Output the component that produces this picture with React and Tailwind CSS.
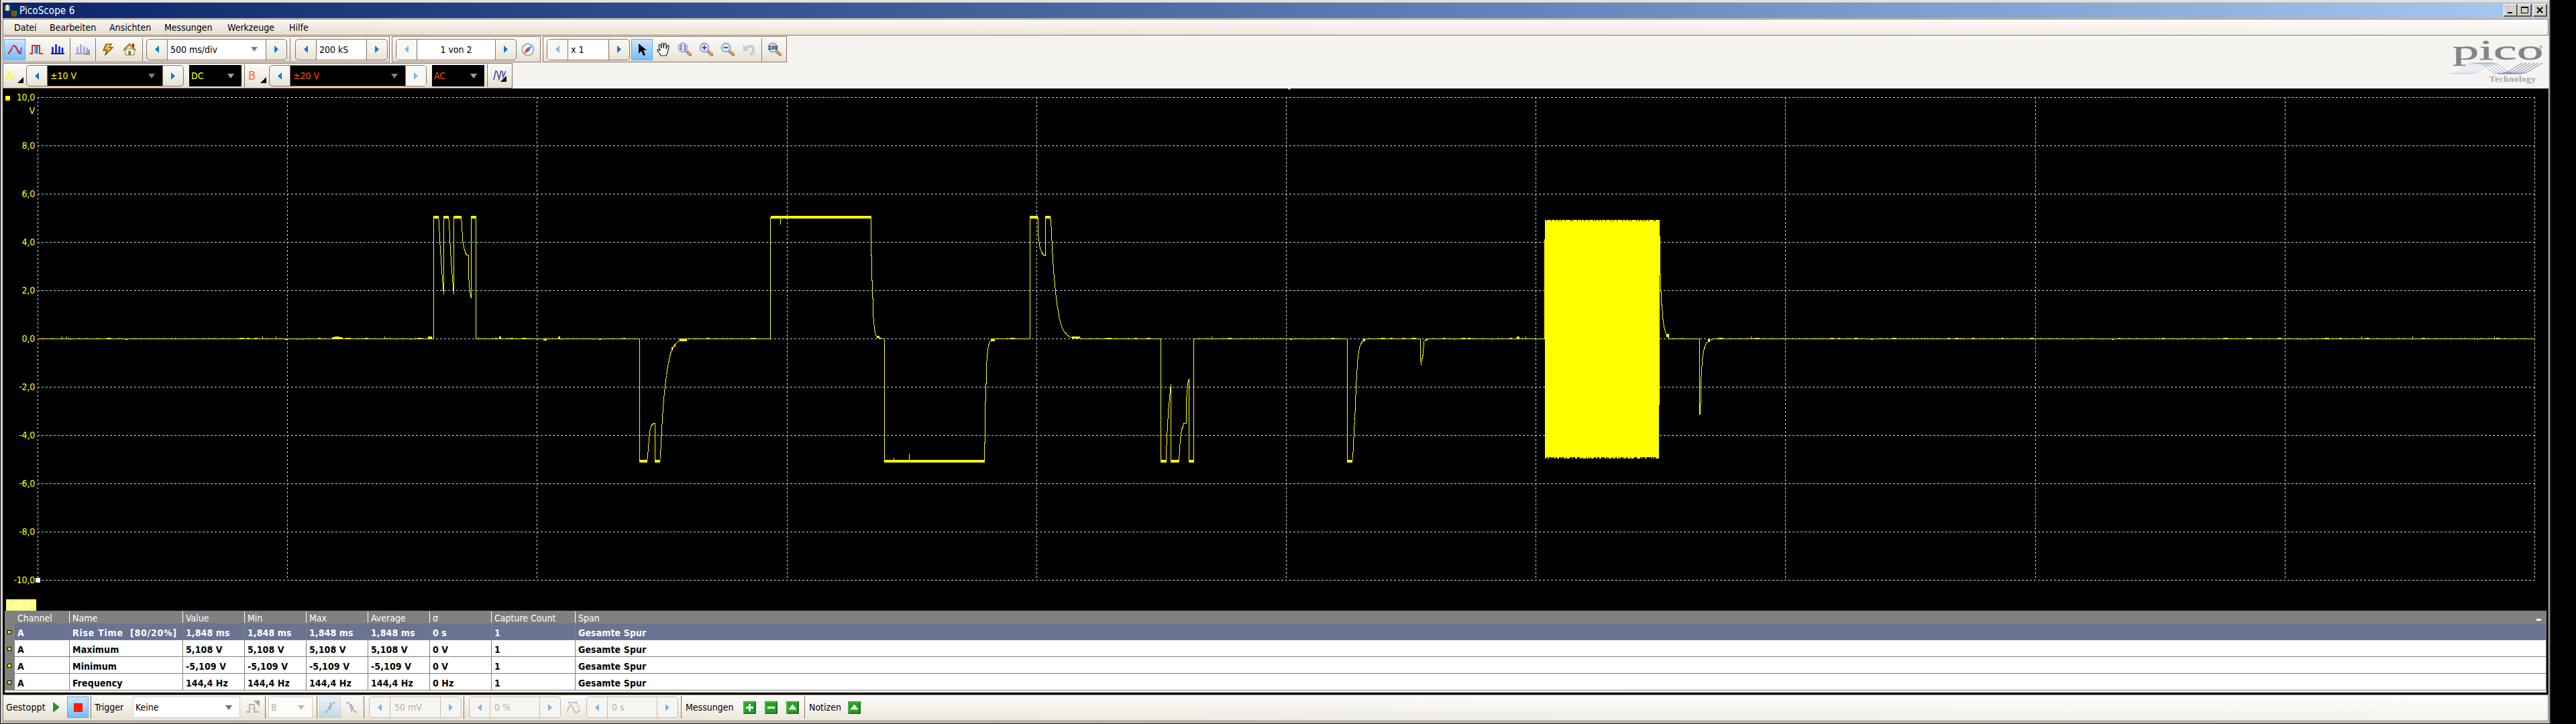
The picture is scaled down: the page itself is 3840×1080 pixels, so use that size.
import React from 'react';
import clsx from 'clsx';

/* ---------- channel A trace ---------- */

const ZERO = 505;

// [x, y] vertices of the captured signal
const TRACE = [
  [56, 505], [646, 505], [646, 324], [653, 324], [654, 331], [655, 357], [656, 372], [657, 386], [658, 404], [659, 415],
  [660, 428], [661, 438], [661, 324], [668, 324], [669, 330], [670, 355], [671, 370], [672, 391], [673, 402], [674, 415],
  [675, 428], [676, 438], [676, 324], [687, 324], [688, 336], [689, 354], [690, 364], [691, 367], [692, 373], [693, 376],
  [695, 380], [698, 380], [698, 412], [699, 423], [700, 435], [701, 440], [702, 444], [702, 324], [709, 324], [709, 505],
  [953, 505], [953, 688], [964, 688], [965, 680], [966, 667], [967, 655], [968, 644], [969, 639], [970, 636], [972, 632],
  [976, 631], [976, 688], [983, 688], [984, 683], [985, 657], [986, 641], [987, 622], [988, 609], [989, 594], [990, 586],
  [991, 576], [992, 567], [993, 560], [994, 551], [995, 546], [996, 541], [997, 537], [998, 531], [999, 527], [1000, 523],
  [1002, 520], [1004, 516], [1007, 512], [1010, 509], [1013, 507], [1025, 505],
  [1148, 505], [1148, 324], [1298, 324], [1298, 381], [1299, 381], [1299, 418], [1300, 418], [1300, 444], [1301, 444],
  [1301, 467], [1302, 480], [1303, 489], [1304, 495], [1305, 500], [1307, 502], [1310, 504], [1318, 505],
  [1318, 688], [1467, 688], [1467, 660], [1468, 660], [1468, 599], [1469, 599], [1469, 572], [1470, 572], [1470, 544],
  [1471, 533], [1472, 522], [1473, 516], [1474, 512], [1475, 509], [1478, 507], [1483, 505],
  [1535, 505], [1535, 324], [1547, 324], [1547, 347], [1548, 357], [1549, 364], [1550, 370], [1552, 375], [1554, 379],
  [1558, 381], [1558, 324], [1565, 324], [1566, 328], [1567, 347], [1568, 370], [1569, 386], [1570, 402], [1571, 414],
  [1572, 423], [1573, 435], [1574, 443], [1575, 452], [1576, 458], [1577, 462], [1578, 471], [1580, 480], [1583, 489],
  [1586, 494], [1590, 499], [1594, 502], [1600, 504], [1620, 505],
  [1730, 505], [1730, 688], [1738, 688], [1738, 677], [1739, 651], [1740, 635], [1741, 615], [1742, 604], [1743, 593],
  [1744, 580], [1745, 573], [1745, 688], [1757, 688], [1758, 670], [1759, 654], [1760, 647], [1761, 640], [1763, 636],
  [1764, 631], [1768, 631], [1768, 596], [1769, 586], [1770, 573], [1771, 567], [1772, 565], [1772, 688], [1779, 688],
  [1779, 505], [2008, 505], [2008, 688], [2015, 688], [2016, 683], [2017, 664], [2018, 641], [2019, 628], [2020, 602],
  [2021, 576], [2022, 560], [2023, 541], [2024, 531], [2025, 525], [2026, 518], [2028, 513], [2030, 509], [2034, 507],
  [2036, 505], [2117, 505], [2117, 535], [2118, 544], [2119, 536], [2121, 528], [2122, 509], [2125, 506], [2129, 505],
  [2302, 505], [2302, 357], [2303, 357], [2474, 352], [2474, 409], [2475, 409], [2475, 435], [2476, 435], [2476, 454],
  [2477, 454], [2478, 470], [2479, 480], [2480, 487], [2482, 494], [2484, 499], [2488, 505],
  [2533, 505], [2533, 618], [2534, 616], [2534, 602], [2535, 602], [2535, 568], [2536, 555], [2537, 537], [2538, 531],
  [2540, 519], [2541, 517], [2543, 511], [2546, 509], [2550, 506], [2555, 505], [3778, 505],
];

// [x, y, w, h] solid areas: clipped plateaus, spikes, noise bumps and the burst
const BLOCKS = [
  [646, 322, 8, 4], [661, 322, 8, 4], [676, 322, 12, 4], [702, 322, 8, 4],
  [953, 686, 12, 4], [976, 686, 8, 4],
  [1149, 322, 150, 4], [1163, 325, 1, 10],
  [1318, 686, 150, 4], [1332, 683, 1, 4], [1355, 677, 1, 10],
  [1535, 322, 12, 4], [1558, 322, 8, 4],
  [1730, 686, 9, 4], [1745, 686, 12, 4], [1772, 686, 8, 4], [2008, 686, 8, 4],
  [638, 502, 6, 3], [744, 502, 3, 3], [832, 502, 3, 3], [810, 506, 5, 2], [1013, 505, 11, 4],
  [495, 503, 16, 2], [499, 502, 7, 2], [1001, 518, 2, 5], [1005, 513, 2, 4],
  [1477, 505, 6, 4], [1598, 502, 12, 3], [1307, 501, 4, 3], [2032, 505, 3, 4], [2125, 505, 3, 3],
  [2261, 502, 4, 3], [2484, 498, 4, 5], [2546, 505, 3, 5],
  [2303, 328, 170, 356], [2473, 328, 1, 276],
];

const IDLE = [[60, 640], [712, 950], [1026, 1146], [1486, 1533], [1622, 1728], [1782, 2006], [2040, 2115], [2132, 2300], [2490, 2530], [2560, 3776]];

function makeRandom(seed) {
  let s = seed;
  return () => {
    s = (s * 1103515245 + 12345) % 2147483648;
    return s / 2147483648;
  };
}

const box = ([x, y, w, h]) => `M${x} ${y}h${w}v${h}h${-w}z`;

function noisePath() {
  const rnd = makeRandom(7);
  let d = '';
  IDLE.forEach(([from, to]) => {
    let x = from + Math.floor(rnd() * 6);
    while (x < to - 8) {
      const w = rnd() > 0.75 ? 3 + Math.floor(rnd() * 6) : 1;
      const kind = rnd();
      if (kind > 0.96) d += box([x, ZERO - 3, 1, 3]);
      else if (kind > 0.86) d += box([x, ZERO + 1, Math.min(w, 3), 1]);
      else d += box([x, ZERO - 1, w, 1]);
      x += w + 2 + Math.floor(rnd() * 13);
    }
  });
  return d;
}

function notchPath() {
  const rnd = makeRandom(21);
  let d = '';
  for (let x = 2305; x < 2470; x += 2 + Math.floor(rnd() * 7)) d += box([x, 328, 1, 2]);
  for (let x = 2305; x < 2470; x += 2 + Math.floor(rnd() * 5)) d += box([x, 682, 1 + Math.floor(rnd() * 3), 2]);
  return d;
}

const COLS = [56, 428, 800, 1173, 1545, 1917, 2289, 2661, 3034, 3406, 3778];
const ROWS = [145, 217, 289, 361, 433, 505, 577, 649, 721, 793, 865];
const LABELS = ['10,0', '8,0', '6,0', '4,0', '2,0', '0,0', '-2,0', '-4,0', '-6,0', '-8,0', '-10,0'];

const Plot = () => (
  <div className="relative h-[779px] bg-black text-[#ff0]">
    <svg className="absolute inset-0" width="3794" height="779" viewBox="4 132 3794 779" shapeRendering="crispEdges">
      <g stroke="#b4dde0" strokeWidth="1" strokeDasharray="3 3">
        {ROWS.map((y) => (
          <line key={y} x1="56" x2="3779" y1={y + 0.5} y2={y + 0.5} />
        ))}
        {COLS.map((x) => (
          <line key={x} x1={x + 0.5} x2={x + 0.5} y1="145" y2="866" />
        ))}
      </g>
      {/* the trace hides the zero line only where it lies on it */}
      <polyline points={TRACE.map(([x, y]) => `${x + 0.5},${y + 0.5}`).join(' ')} fill="none" stroke="#ff0" strokeWidth="1" />
      <path d={BLOCKS.map(box).join('') + noisePath()} fill="#ff0" />
      <path d={notchPath()} fill="#000" />
      <rect x="8" y="143" width="7" height="7" fill="#ff0" />
      <rect x="53" y="862" width="7" height="7" fill="#fff" />
      <path d="M1919 132h6l-3 2z" fill="#bbb" />
    </svg>
    {LABELS.map((label, i) => (
      <span
        key={label}
        className="absolute left-0 w-[48px] text-right leading-[18px] -tracking-[0.2px]"
        style={{ top: ROWS[i] - 132 - 9 }}
      >
        {label}
      </span>
    ))}
    <span className="absolute top-[24px] left-0 w-[48px] text-right leading-[18px]">V</span>
    <div className="absolute bottom-0 left-[5px] flex h-[17px] w-[45px] items-center justify-center bg-[#ffff80] text-white">x1,0</div>
  </div>
);

/* ---------- toolbar parts ---------- */

const barGradient = 'bg-linear-to-b from-[#fbfaf8] via-[#f3f0e9] to-[#e6e0d0]';

const Toolbar = ({ className, children }) => (
  <div className={clsx('flex items-center border border-[#8c7063]', barGradient, className)}>{children}</div>
);

const Sep = ({ className }) => <div className={clsx('h-[34px] w-px shrink-0 bg-[#8c7063]', className)} />;

const Slot = ({ active, dim, className, children }) => (
  <div
    className={clsx(
      'flex size-[32px] shrink-0 items-center justify-center',
      active && 'border border-[#5cabea] bg-linear-to-b from-[#cbe6fb] to-[#74bcf8]',
      dim && 'opacity-35',
      className
    )}
  >
    {children}
  </div>
);

const Arrow = ({ left, dim }) => (
  <svg width="6" height="11" viewBox="0 0 6 11" className={dim ? 'opacity-50' : ''}>
    <path d={left ? 'M6 0v11L0 5.500z' : 'M0 0v11l6-5.500z'} fill="#0a7cd0" />
  </svg>
);

const Caret = ({ color = '#808080' }) => (
  <svg width="10" height="7" viewBox="0 0 10 7">
    <path d="M0 0h10L5 7z" fill={color} />
  </svg>
);

// "< value >" control, optionally with a drop-down arrow in the field
const Spinner = ({ className, fieldClass = 'bg-white text-black', caretClass = 'mr-[6px]', text, caret, center, dimLeft, dimRight, off }) => (
  <div
    className={clsx(
      'flex h-[32px] shrink-0 overflow-hidden rounded-[5px] border',
      off ? 'border-[#c4bbb2] bg-[#f7f5f1] text-[#b3b1ad]' : 'border-[#8c7063]',
      className
    )}
  >
    <div className={clsx('flex w-[30px] shrink-0 items-center justify-center', dimLeft && 'bg-[#f8f7f4]')}>
      <Arrow left dim={dimLeft || off} />
    </div>
    <div
      className={clsx(
        'flex grow items-center border-x px-[4px]',
        center && 'justify-center',
        off ? 'border-[#c4bbb2] pl-[6px]' : 'border-[#8c7063]',
        !off && fieldClass
      )}
    >
      <span>{text}</span>
      {caret && (
        <span className={clsx('ml-auto', caretClass)}>
          <Caret />
        </span>
      )}
    </div>
    <div className={clsx('flex w-[30px] shrink-0 items-center justify-center', dimRight && 'bg-[#f8f7f4]')}>
      <Arrow dim={dimRight || off} />
    </div>
  </div>
);

const Select = ({ className, text, caret }) => (
  <div className={clsx('flex h-[32px] shrink-0 items-center justify-between pr-[11px] pl-[3px]', className)}>
    <span>{text}</span>
    <Caret color={caret} />
  </div>
);

const Magnifier = ({ children }) => (
  <svg width="22" height="22" viewBox="0 0 22 22">
    <path d="M12.500 12.500l6.500 6" stroke="#8a7f86" strokeWidth="4.500" strokeLinecap="round" />
    <path d="M13 12.500l6 5.500" stroke="#f29a4a" strokeWidth="3" strokeLinecap="round" />
    <circle cx="8" cy="8" r="6.500" fill="#d8e9fb" stroke="#92a9cc" strokeWidth="1.800" />
    {children}
  </svg>
);

const BarsIcon = () => (
  <svg width="20" height="16" viewBox="0 0 20 16">
    <path d="M2.500 4v9M7.500 0v13M12.500 3v10M17 5v8" stroke="#0a1ee0" strokeWidth="2.600" />
    <path d="M0 14h20" stroke="#222266" strokeWidth="2" />
  </svg>
);

const Corner = ({ className }) => (
  <svg width="9" height="9" viewBox="0 0 9 9" className={className}>
    <path d="M9 0v9H0z" fill="#000" />
  </svg>
);

const GreenButton = ({ className, d }) => (
  <svg width="19" height="19" viewBox="0 0 19 19" className={clsx('shrink-0', className)}>
    <rect x="0.500" y="0.500" width="18" height="18" fill="#1ea51e" stroke="#0d7a1c" />
    <path d="M1 18V1h17" fill="none" stroke="#7fd07f" />
    <path d="M18 2v16H2" fill="none" stroke="#31563c" strokeWidth="1.500" />
    <path d={d} fill="#fff" />
  </svg>
);

/* ---------- window parts ---------- */

const CaptionButton = ({ className, children }) => (
  <div
    className={clsx(
      'flex h-[19px] w-[21px] items-center justify-center border-t border-r-2 border-b-2 border-l border-t-white border-r-[#55534f] border-b-[#55534f] border-l-white bg-[#d4d0c8]',
      className
    )}
  >
    <svg width="14" height="14" viewBox="0 0 14 14" shapeRendering="crispEdges">
      {children}
    </svg>
  </div>
);

const TitleBar = () => (
  <div className="flex h-[23px] items-center bg-linear-to-r from-[#0a246a] to-[#a6caf0] text-white">
    <svg width="20" height="20" viewBox="0 0 20 20" className="ml-[2px]">
      <defs>
        <linearGradient id="up" x1="0" x2="1">
          <stop offset="0" stopColor="#e03020" />
          <stop offset="0.5" stopColor="#fff" />
          <stop offset="1" stopColor="#20a020" />
        </linearGradient>
        <linearGradient id="down" x1="0" x2="1">
          <stop offset="0" stopColor="#e02010" />
          <stop offset="0.5" stopColor="#705010" />
          <stop offset="1" stopColor="#10a010" />
        </linearGradient>
      </defs>
      <path d="M1 10V5q0-4 4-4t4 4v5z" fill="url(#up)" />
      <path d="M11 10h8v5q0 4-4 4t-4-4z" fill="url(#down)" />
    </svg>
    <span className="ml-[3px] pt-px text-[15px] tracking-[0.1px]">PicoScope 6</span>
    <div className="mr-[2px] ml-auto flex">
      <CaptionButton>
        <rect x="3" y="10" width="7" height="2" />
      </CaptionButton>
      <CaptionButton>
        <path d="M2 2h11v10H2zM3 4v7h9V4z" fillRule="evenodd" />
      </CaptionButton>
      <CaptionButton className="ml-[2px]">
        <path d="M3 3l8 8M11 3l-8 8" stroke="#000" strokeWidth="2" shapeRendering="auto" />
      </CaptionButton>
    </div>
  </div>
);

const MenuBar = () => (
  <div className="relative mt-px flex h-[25px] items-center border border-[#8c7063] bg-linear-to-b from-[#f8f6f2] to-[#e5dece]">
    {/* bar gets lighter towards the right edge */}
    <div className="absolute inset-0 bg-linear-to-r from-transparent to-white/60" />
    <span className="relative w-[53px] pl-[16px]">Datei</span>
    <span className="relative ml-[16px] w-[89px]">Bearbeiten</span>
    <span className="relative w-[82px]">Ansichten</span>
    <span className="relative w-[94px]">Messungen</span>
    <span className="relative w-[92px]">Werkzeuge</span>
    <span className="relative">Hilfe</span>
  </div>
);

const PicoLogo = () => (
  <svg width="150" height="79" viewBox="3648 53 150 79" className="ml-auto">
    <g fill="none" strokeWidth="0.900">
      {[0, 6, 12, 18, 24, 30].map((o) => (
        <path key={o} d={`M${3649 + o} 110c24 0 20-16 38-16`} stroke="#b4cdea" />
      ))}
      {[0, 6, 12, 18, 24].map((o) => (
        <path key={o} d={`M${3686 + o} 94c24 0 20 16 40 16`} stroke="#8fa9cc" />
      ))}
      {[0, 6, 12, 18, 24, 30].map((o) => (
        <path key={o} d={`M${3723 + o} 110c14 0 18-6 36-16`} stroke="#5f7699" />
      ))}
    </g>
    <text transform="translate(3655 89) scale(1.870 1)" fontFamily="Liberation Serif, serif" fontSize="42" fill="#858585" stroke="#858585" strokeWidth="0.500">
      pico
    </text>
    <text x="3783" y="73" fontFamily="Liberation Serif, serif" fontSize="9" fill="#858585">
      ®
    </text>
    <text x="3710" y="121.500" textLength="69" fontFamily="Liberation Serif, serif" fontWeight="bold" fontSize="13" fill="#a3a3a3">
      Technology
    </text>
  </svg>
);

const TopTools = () => (
  <div className="flex h-[39px] gap-[3px]">
    <Toolbar className="w-[577px] pl-[1px]">
      <Slot active>
        <svg width="22" height="16" viewBox="0 0 22 16" fill="none" strokeWidth="2">
          <path d="M1 14c4 0 5-12 9-12s5 12 8 12 2-6 3-9" stroke="#5a6ad8" />
          <path d="M1 13c3 0 4-4 6-7M8 3c6-3 7 10 13 11" stroke="#e8242c" />
        </svg>
      </Slot>
      <Slot>
        <svg width="20" height="16" viewBox="0 0 20 16">
          <path d="M7 2h6v12H7z" fill="#7fb8dc" />
          <path d="M9 2h3v12H9z" fill="#3f86b8" />
          <path d="M0 14h4V2h11v12h5" fill="none" stroke="#ee2222" strokeWidth="2" />
        </svg>
      </Slot>
      <Slot>
        <BarsIcon />
      </Slot>
      <Sep className="ml-[2px]" />
      <Slot dim className="ml-[2px]">
        <BarsIcon />
        <Corner className="-ml-[8px] translate-y-[4px]" />
      </Slot>
      <Sep className="ml-[3px]" />
      <Slot className="ml-[2px]">
        <svg width="18" height="18" viewBox="0 0 18 18">
          <path d="M6 1h8l-4 5h6L5 17l2-7H2z" fill="#f0ac22" stroke="#6d4a10" strokeWidth="1.300" />
          <path d="M7 2h5l-4 5h5" fill="none" stroke="#fff0a0" />
        </svg>
      </Slot>
      <Slot>
        <svg width="20" height="19" viewBox="0 0 20 19">
          <path d="M14 1h3v6h-3z" fill="#b02020" />
          <path d="M4 9h13v9H4z" fill="#fffbe8" stroke="#8a6d2b" />
          <path d="M1 11l9-9 9 9" fill="none" stroke="#a98222" strokeWidth="2.500" />
          <path d="M8.500 12h3.500v6H8.500z" fill="#6b6350" />
        </svg>
      </Slot>
      <Sep className="ml-[3px]" />
      <Spinner className="ml-[5px] w-[210px]" text="500 ms/div" caret caretClass="mr-[8px]" />
      <Sep className="ml-[4px]" />
      <Spinner className="ml-[7px] w-[138px]" text="200 kS" />
    </Toolbar>

    <Toolbar className="w-[222px] pl-[5px]">
      <Spinner className="w-[180px]" text="1 von 2" center dimLeft />
      <Slot className="ml-[1px]">
        <svg width="20" height="20" viewBox="0 0 20 20">
          <circle cx="10" cy="10" r="8.500" fill="#f4f6f8" stroke="#a9adb5" strokeWidth="2" />
          <path d="M16 4l-8 4 4 4z" fill="#3b7be8" />
          <path d="M4 16l4-8 4 4z" fill="#e8303a" />
        </svg>
      </Slot>
    </Toolbar>

    <Toolbar className="w-[364px] pl-[5px]">
      <Spinner className="w-[124px]" text="x 1" dimLeft />
      <Slot active className="ml-[2px]">
        <svg width="14" height="20" viewBox="0 0 14 20">
          <path d="M2 1v15l4-4 3 7 3-1-3-7h5z" fill="#000" />
        </svg>
      </Slot>
      <Slot>
        <svg width="20" height="21" viewBox="0 0 20 21">
          <path
            d="M6 20c-1-3-4-5-5-8 0-2 2-2 4 1L3 5c0-2 2-2 3 0l1 4V3c0-2 3-2 3 0v6l1-6c1-2 3-1 3 0v7l2-5c1-1 3 0 2 2l-2 9-2 4z"
            fill="#fff"
            stroke="#222"
            strokeWidth="1.200"
          />
        </svg>
      </Slot>
      <Slot>
        <Magnifier>
          <path d="M6.500 5H5v6h1.500M9.500 5H11v6H9.500" fill="none" stroke="#6a55b0" strokeWidth="1.500" />
        </Magnifier>
      </Slot>
      <Slot>
        <Magnifier>
          <path d="M8 4.500v7M4.500 8h7" stroke="#6a45a8" strokeWidth="2" />
        </Magnifier>
      </Slot>
      <Slot>
        <Magnifier>
          <path d="M4.500 8h7" stroke="#6a45a8" strokeWidth="2" />
        </Magnifier>
      </Slot>
      <Slot>
        <svg width="20" height="20" viewBox="0 0 20 20">
          <path d="M5 8c6-6 12-3 11 3-.5 4-3 6-5 7" fill="none" stroke="#c3cddd" strokeWidth="4" />
          <path d="M1 2v10h9z" fill="#c3cddd" />
        </svg>
      </Slot>
      <Sep className="ml-[2px]" />
      <Slot className="ml-[3px]">
        <Magnifier>
          <text x="1" y="11" fontFamily="Liberation Sans, sans-serif" fontSize="8.500" fontWeight="bold" fill="#111">
            100
          </text>
        </Magnifier>
      </Slot>
    </Toolbar>
  </div>
);

const ChannelTools = () => (
  <Toolbar className="mt-px h-[38px] w-[760px] pl-[4px]">
    <span className="w-[12px] text-[18px] text-[#ff0]">A</span>
    <Corner className="mt-[12px] ml-[5px] shrink-0" />
    <Spinner className="ml-[4px] w-[235px]" fieldClass="bg-black text-[#ff0]" text="±10 V" caret caretClass="mr-[7px]" />
    <Select className="ml-[8px] w-[78px] bg-black text-[#ff0]" text="DC" caret="#a0a0a0" />
    <Sep className="ml-[4px]" />
    <span className="ml-[5px] w-[12px] text-[18px] text-[#ff6a2a]">B</span>
    <Corner className="mt-[12px] ml-[6px] shrink-0" />
    <Spinner className="ml-[4px] w-[235px]" fieldClass="bg-black text-[#ff5000]" text="±20 V" caret caretClass="mr-[7px]" dimRight />
    <Select className="ml-[8px] w-[78px] bg-black text-[#ff5000]" text="AC" caret="#a0a0a0" />
    <Sep className="ml-[4px]" />
    <div className="ml-[8px] flex shrink-0 items-end">
      <svg width="20" height="18" viewBox="0 0 20 18">
        <path d="M1 15L4 2l2 1 3 11L12 2l2 1 1 8 4-9" fill="none" stroke="#5a58b0" strokeWidth="1.800" />
        <path d="M20 9v9h-9z" fill="#000" />
      </svg>
    </div>
  </Toolbar>
);

/* ---------- measurements ---------- */

const COLUMNS = [
  { title: 'Channel', width: 'w-[81px]' },
  { title: 'Name', width: 'w-[169px]' },
  { title: 'Value', width: 'w-[92px]' },
  { title: 'Min', width: 'w-[92px]' },
  { title: 'Max', width: 'w-[92px]' },
  { title: 'Average', width: 'w-[92px]' },
  { title: 'σ', width: 'w-[92px]' },
  { title: 'Capture Count', width: 'w-[125px]' },
  { title: 'Span', width: 'grow' },
];

const MEASUREMENTS = [
  ['A', 'Rise Time  [80/20%]', '1,848 ms', '1,848 ms', '1,848 ms', '1,848 ms', '0 s', '1', 'Gesamte Spur'],
  ['A', 'Maximum', '5,108 V', '5,108 V', '5,108 V', '5,108 V', '0 V', '1', 'Gesamte Spur'],
  ['A', 'Minimum', '-5,109 V', '-5,109 V', '-5,109 V', '-5,109 V', '0 V', '1', 'Gesamte Spur'],
  ['A', 'Frequency', '144,4 Hz', '144,4 Hz', '144,4 Hz', '144,4 Hz', '0 Hz', '1', 'Gesamte Spur'],
];

const MeasurementTable = () => (
  <div className="h-[125px] bg-black pr-[3px] pl-[3px]">
    <div className="h-[122px] bg-white">
      <div className="flex h-[19px] items-center bg-[#808080] pl-[15px] text-white">
        {COLUMNS.map(({ title, width }, i) => (
          <div key={title} className={clsx('flex h-[17px] items-center pt-[2px] pl-[4px]', width, i > 0 && 'border-l border-white')}>
            {title}
          </div>
        ))}
        <div className="mt-[8px] mr-[8px] h-[3px] w-[7px] bg-white" />
      </div>
      {MEASUREMENTS.map((row, r) => (
        <div key={row[1]} className="flex h-[25px]">
          <div className="flex w-[15px] shrink-0 items-center bg-[#808080] pl-[4px]">
            <div className="size-[6px] border border-black bg-[#ff0]" />
          </div>
          <div
            className={clsx(
              'flex grow border-r border-b border-[#808080] font-bold',
              r === 0 ? 'bg-[#6a7391] text-white' : 'text-black'
            )}
          >
            {row.map((cell, i) => (
              <div
                key={i}
                className={clsx(
                  'flex items-center pt-[3px] pl-[4px] whitespace-pre',
                  COLUMNS[i].width,
                  i > 0 && 'border-l border-[#808080]',
                  r === 0 && i === 1 ? 'tracking-[0.75px]' : 'tracking-[0.1px]'
                )}
              >
                {cell}
              </div>
            ))}
          </div>
        </div>
      ))}
    </div>
  </div>
);

/* ---------- status bar ---------- */

const StatusBar = () => (
  <div className="relative h-[40px] border border-[#8c7063] bg-linear-to-b from-[#fbfaf8] via-[#f3f0e9] to-[#e6e0d0]">
    <div className="absolute inset-0 bg-linear-to-r from-transparent to-white/60" />
    <div className="relative flex h-full items-center pb-[2px] pl-[4px]">
      <span className="w-[70px] tracking-[0.15px]">Gestoppt</span>
      <svg width="10" height="16" viewBox="0 0 10 16">
        <path d="M0 0v16l10-8z" fill="#2f8f2f" />
      </svg>
      <Slot active className="ml-[11px]">
        <div className="size-[13px] bg-[#ff1a00]" />
      </Slot>
      <Sep className="ml-[3px]" />
      <span className="ml-[5px] w-[57px]">Trigger</span>
      <Select className="w-[160px] border border-[#d5cfc6] bg-white" text="Keine" caret="#707070" />
      <svg width="20" height="20" viewBox="0 0 20 20" className="ml-[9px] opacity-50">
        <path d="M0 17h5V6h7v11h7" fill="none" stroke="#777" strokeWidth="2" />
        <path d="M11 0h9v9z" fill="#555" />
        <circle cx="12" cy="12" r="2.500" fill="#6fc06f" />
      </svg>
      <Sep className="ml-[8px]" />
      <Select className="ml-[4px] w-[66px] border border-[#d5cfc6] bg-white/80 text-[#b3b1ad]" text="B" caret="#c4b8b0" />
      <Sep className="ml-[6px]" />
      <Slot active dim className="ml-[3px]">
        <svg width="18" height="18" viewBox="0 0 18 18" fill="none" stroke="#3a3a80" strokeWidth="1.800">
          <path d="M1 16h3L14 2h3M9 2v12M6 9h6" />
        </svg>
      </Slot>
      <Slot dim>
        <svg width="18" height="18" viewBox="0 0 18 18" fill="none" stroke="#3a3a80" strokeWidth="1.800">
          <path d="M1 2h3l10 14h3M9 4v12M6 9h6" />
        </svg>
      </Slot>
      <Sep className="ml-[2px]" />
      <Spinner className="ml-[7px] w-[138px]" text="50 mV" off />
      <Sep className="ml-[3px]" />
      <Spinner className="ml-[7px] w-[137px]" text="0 %" off />
      <svg width="20" height="18" viewBox="0 0 20 18" className="ml-[9px] opacity-50">
        <path d="M0 14c3 0 3-8 6-8s4 11 8 11 3-4 6-5" fill="none" stroke="#888" strokeWidth="1.800" />
        <path d="M2 2h14M4 0v5M14 0v5" stroke="#8a7fe0" strokeWidth="1.500" />
        <circle cx="17" cy="8" r="2.500" fill="#e5d88a" />
      </svg>
      <Spinner className="ml-[9px] w-[137px]" text="0 s" off />
      <Sep className="ml-[4px]" />
      <span className="ml-[6px] w-[86px]">Messungen</span>
      <GreenButton d="M8 4h3v4h4v3h-4v4H8v-4H4V8h4z" />
      <GreenButton className="ml-[13px]" d="M4 8h11v3H4z" />
      <GreenButton className="ml-[13px]" d="M9.500 4.500l6 8h-12z" />
      <Sep className="ml-[8px]" />
      <span className="ml-[6px] w-[58px]">Notizen</span>
      <GreenButton d="M9.500 4.500l6 8h-12z" />
    </div>
  </div>
);

const App = () => (
  <div className="h-[1080px] w-[3840px] overflow-hidden bg-black font-['DejaVu_Sans_Condensed','DejaVu_Sans',sans-serif] text-[14px] leading-none font-normal text-black [font-stretch:condensed]">
    <div className="h-full w-[3802px] border-r border-b border-l border-[#404040]">
      <div className="h-full border-r border-b border-l border-[#808080] bg-[#d4d0c8] pt-px">
        <div className="h-full border-t border-l border-white px-[1px] pt-[2px]">
          <TitleBar />
          <MenuBar />
          <div className="flex h-[79px] bg-[#f6f4f0]">
            <div className="pt-px">
              <TopTools />
              <ChannelTools />
            </div>
            <PicoLogo />
          </div>
          <Plot />
          <MeasurementTable />
          <StatusBar />
        </div>
      </div>
    </div>
  </div>
);

export default App;
